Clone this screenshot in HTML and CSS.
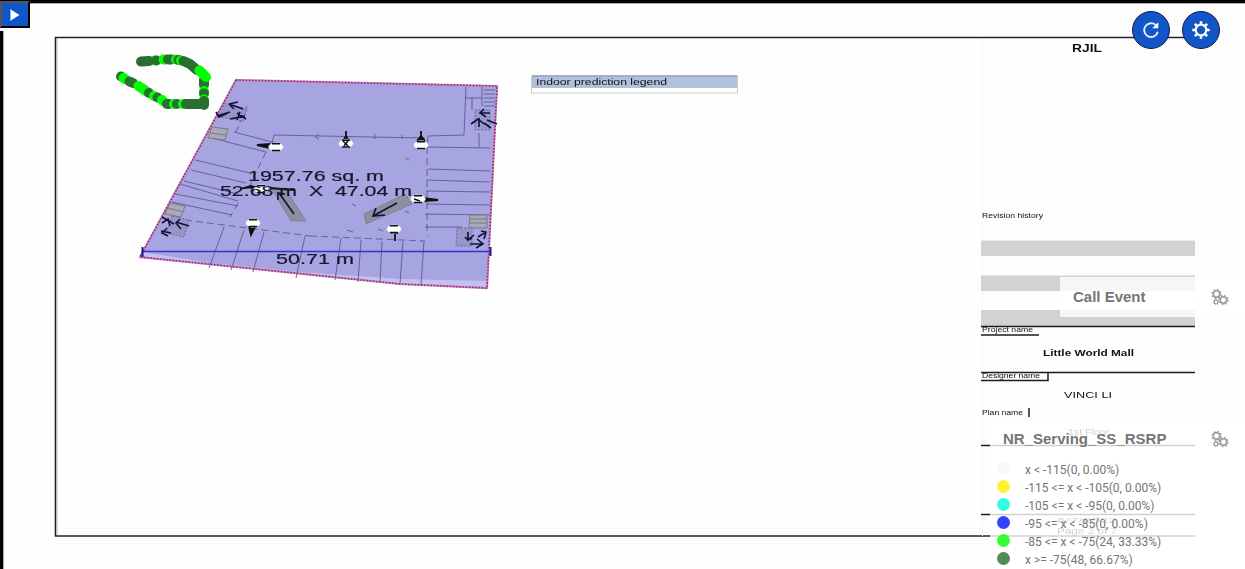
FILE: index.html
```html
<!DOCTYPE html>
<html lang="en">
<head>
<meta charset="utf-8">
<title>Indoor floor plan</title>
<link rel="stylesheet" href="styles.css">
</head>
<body>
<main class="map">
<svg class="plan" viewBox="0 0 1245 569" width="1245" height="569">
  <defs>
    <g id="cam"><ellipse rx="7.500" ry="4.400" fill="#fff" stroke="#a9a7c4" stroke-width=".6"/><path d="M-4-3.200H4M-4 3.500H4" stroke="#111" stroke-width="1.500"/></g>
  </defs>
  <!-- window and sheet borders -->
  <path d="M0 0H1245V3H0zM0 31H3V569H0z" fill="#000"/>
  <path d="M30 3.5H1245M3.5 31V569" stroke="#aaa" fill="none"/>
  <path d="M1195 37.5H55.5V536H990" stroke="#222" stroke-width="1.6" fill="none"/>
  <path d="M57.5 39V535" stroke="#ddd"/>
  <path d="M982.5 39V536M1198 39V420" stroke="#f8f8f8"/>

  <!-- building outline -->
  <g class="scan">
  <path d="M236 80L497 86L487 288L400 284L140 257z" fill="#a6a4e1"/>
  <path d="M143 252L210 263L300 272L400 279L488 281V287L400 284L140 257z" fill="#c5c0f2"/>
  <path d="M236 80L497 86L487 288L400 284L140 257z" fill="none" stroke="#d77cba" stroke-width="2.200"/>
  <path d="M236 80L497 86L487 288L400 284L140 257z" fill="none" stroke="#63386f" stroke-width="1.5" stroke-dasharray="1.4 1.8"/>
  <!-- rooms and bays -->
  <g class="walls">
    <path d="M466 87L464 135L428 136L427 147L490 148M428 169L490 171M427 180L490 182M426 191L490 192M426 204L490 205M425 214L490 215M425 227L462 227M479 133V147M465 98H472V110M472 98H482M482 87V106M484 90H495M484 94H495M484 98H495M484 102H495M484 106H495"/>
    <path d="M274 135L370 137L425 138M274 135L272 143M315 137L319 134M315 137L319 139M375 134V139M402 135V139M234 132L276 143M212 138L266 152M195 160L250 173M191 170L246 183M184 181L238 194M180 184L238 201M175 194L238 206M172 202L232 215"/>
    <path d="M247 106L236 132M266 152L249 187M238 203L230 217M185 220L310 236M310 236L425 241M427 147V236" stroke-dasharray="7 4"/>
    <path d="M224 227L209 268M244 230L231 270M264 232L253 272M305 236L296 278M341 238L335 280M361 240L358 282M382 241L380 283M403 241L400 284M424 241L421 285"/>
    <path d="M352 204L356 206M405 158L409 160M347 230L353 232M378 229L383 231M405 211L409 213"/>
  </g>
  <g class="stairs">
    <path d="M212 127L228 129L225 140L208 138zM210 133L226 135M170 203L185 206L181 217L165 214zM168 208L183 212"/>
    <path d="M470 215H487V228H469zM470 219H487M470 223H487"/>
  </g>
  <path d="M457 228H472V246H456zM475 110H490V130H475z" class="dots"/>
  <path d="M224 103L247 109L243 121L220 117zM172 216L189 220L184 237L166 233z" class="dots"/>
  <!-- ramps -->
  <path d="M272 189L285 188L306 221H291zM405 194L412 204L366 224L364 214z" fill="#8f8e9f" stroke="#77758a" stroke-dasharray="2 1"/>
  <path d="M279 193L294 214M278 200V193L285 194M397 203L373 216M376 208L373 216L385 215" class="arrow"/>
  <!-- direction arrows -->
  <g class="arrow">
    <path d="M229 104L243 109M229 104L238 102M229 104L234 109M216 112L219 117L228 113M217 116L230 112M230 119L245 116M237 113L246 119M240 112L237 120"/>
    <path d="M471 124L478 119L484 124M479 118V127M487 120L497 124M480 113H490M484 109L480 113L486 117M484 123L491 128"/>
    <path d="M162 217L174 224M162 223L168 219L170 226M161 231L171 233M167 228L162 233L168 236M176 222L189 226M180 219L176 223L181 229"/>
    <path d="M468 232V240L474 235M465 237L468 240L472 238M478 237L486 232M481 231L486 232L484 239M470 244H483M477 239L483 244L476 248"/>
  </g>
  <!-- antennas -->
  <path d="M257 145L270 144V148zM346 131V139M343 141L346 136L349 141M421 131V140M417 141L421 136L425 141M249 227L251 235L255 227zM391 233H398M395 233V241M422 198L438 200L424 201zM240 189L251 186L258 188M270 188L294 190" class="beam"/>
  <use href="#cam" x="276" y="147"/><use href="#cam" x="346" y="143.5"/><use href="#cam" x="421" y="145"/>
  <use href="#cam" x="261" y="189"/><use href="#cam" x="253" y="223"/><use href="#cam" x="394" y="229"/><use href="#cam" x="418" y="199"/>
  <path d="M343 141L348 146M348 141L344 146M414 199L420 201" class="arrow"/>
  <!-- measurements -->
  <path d="M142 251.5H490" stroke="#3334c8" stroke-width="1.4"/>
  <path d="M142.5 247V257M490.500 247V256" stroke="#22128c" stroke-width="2"/>
  <g class="measure">
    <text x="248" y="181" textLength="136" lengthAdjust="spacingAndGlyphs">1957.76 sq. m</text>
    <text x="220" y="196" textLength="192" lengthAdjust="spacingAndGlyphs">52.68 m&#160; X&#160; 47.04 m</text>
    <text x="276" y="264" textLength="78" lengthAdjust="spacingAndGlyphs">50.71 m</text>
  </g>
  </g>

  <!-- measured route: overlapping samples, later ones on top -->
  <g class="route">
    <path class="weak" d="M154.500 60.500h.01"/>
    <path d="M141 61.500L149 61M156.500 60.500h.01"/>
    <path class="weak" d="M163.500 59.500L165 59.500"/>
    <path d="M168 59.500L171.500 59.500"/>
    <path class="weak" d="M176 59.500h.01"/>
    <path d="M178.500 60h.01"/>
    <path class="weak" d="M181 60.500h.01"/>
    <path d="M183.500 61L190 64L197 70M204 80V85"/>
    <path class="weak" d="M199.500 70.500L206 77"/>
    <path class="weak" d="M204 91h.01"/>
    <path d="M204 93.500h.01"/>
    <path class="weak" d="M204 99.500h.01"/>
    <path d="M121 76.500h.01"/>
    <path class="weak" d="M123.500 78L125 79"/>
    <path d="M129.500 81.500L133 83"/>
    <path class="weak" d="M138.500 86L146 91"/>
    <path d="M149 93h.01"/>
    <path class="weak" d="M154 96h.01"/>
    <path d="M157.500 97.500h.01"/>
    <path class="weak" d="M162 100L163 101"/>
    <path d="M167 104L169 104"/>
    <path class="weak" d="M174 104h.01"/>
    <path d="M177 104h.01"/>
    <path class="weak" d="M183 104h.01"/>
    <path d="M186 104H204M204 101V105"/>
  </g>

  <!-- prediction legend on the sheet -->
  <path d="M531.500 75.500H737.500V93H531.500z" fill="#fff" stroke="#ccc"/>
  <path d="M532 76H737V88H532z" fill="#b0c1dc"/>
  <path d="M532 76H737" stroke="#8498b4"/>
  <g class="soft">
    <text x="536" y="85" font-size="9" textLength="131" lengthAdjust="spacingAndGlyphs">Indoor prediction legend</text>
  </g>

  <!-- title block -->
  <path d="M981 240.500H1195V256H981zM981 275.500H1195V291H981zM981 310H1195V326H981z" fill="#d2d2d2"/>
  <path d="M981 326.500H1195M981 372.500H1195M981 335H1039M981 380.500H1048V373M1029 408V417M981 445.500H1195M981 514.500H1195M990 536H1195" stroke="#1c1c1c" stroke-width="1.5" fill="none"/>
  <g class="soft">
    <text x="1072" y="52" font-size="10" class="bold" textLength="30" lengthAdjust="spacingAndGlyphs">RJIL</text>
    <text x="982" y="218" font-size="7" textLength="61" lengthAdjust="spacingAndGlyphs">Revision history</text>
    <text x="982" y="332" font-size="7" textLength="51" lengthAdjust="spacingAndGlyphs">Project name</text>
    <text x="1043" y="356" font-size="9" class="bold" textLength="91" lengthAdjust="spacingAndGlyphs">Little World Mall</text>
    <text x="982" y="378" font-size="7" textLength="58" lengthAdjust="spacingAndGlyphs">Designer name</text>
    <text x="1064" y="398" font-size="9" textLength="48" lengthAdjust="spacingAndGlyphs">VINCI LI</text>
    <text x="982" y="415" font-size="7" textLength="41" lengthAdjust="spacingAndGlyphs">Plan name</text>
    <text x="1068" y="435" font-size="9" textLength="41" lengthAdjust="spacingAndGlyphs">1st Floor</text>
    <text x="1057" y="523" font-size="8" textLength="60" lengthAdjust="spacingAndGlyphs">6/7/2022</text>
    <text x="1057" y="534" font-size="9" textLength="60" lengthAdjust="spacingAndGlyphs">Page 2 of 7</text>
  </g>
</svg>

<button class="play" aria-label="Play"><svg width="10" height="12" viewBox="0 0 10 12"><path d="M0 0L9.500 6L0 12z" fill="#fff"/><path d="M.5 0V12" stroke="#63caff"/></svg></button>

<div class="tools">
  <button class="round" aria-label="Refresh"><svg width="20" height="20" viewBox="0 0 20 20"><path d="M15.200 5.400A6.900 6.900 0 1 0 16.800 11.800" fill="none" stroke="#e5edfa" stroke-width="1.900"/><path d="M17.300 2.300V8.300H11.200z" fill="#fff"/></svg></button>
  <button class="round" aria-label="Settings"><svg width="20" height="20" viewBox="-10 -10 20 20"><circle r="5.300" fill="none" stroke="#fff" stroke-width="2.200"/><g stroke="#fff" stroke-width="2.600"><path d="M0-8.700V-5M0 8.700V5M-8.700 0H-5M8.700 0H5M-6.100-6.100L-4-4M6.100-6.100L4-4M-6.100 6.100L-4 4M6.100 6.100L4 4"/></g></svg></button>
</div>

<aside class="panels">
  <section class="panel event">
    <h2>Call Event</h2>
    <svg class="gears" width="18" height="17" viewBox="0 0 18 17"><g fill="none" stroke="#999"><g id="gear"><circle cx="5.500" cy="5" r="3.200" stroke-width="1.500"/><circle cx="5.500" cy="5" r="4.500" stroke-width="1.300" stroke-dasharray="1.700 1.834"/></g><use href="#gear" x="7" y="6"/><circle cx="5" cy="13" r="1.800" stroke-width="1.200"/><circle cx="5" cy="13" r="2.700" stroke-dasharray="1 1.120"/></g></svg>
  </section>
  <section class="panel signal">
    <header><h2>NR_Serving_SS_RSRP</h2>
    <svg class="gears" width="18" height="17" viewBox="0 0 18 17"><g fill="none" stroke="#999"><use href="#gear"/><use href="#gear" x="7" y="6"/><circle cx="5" cy="13" r="1.800" stroke-width="1.200"/><circle cx="5" cy="13" r="2.700" stroke-dasharray="1 1.120"/></g></svg></header>
    <ul>
      <li><i class="none"></i>x &lt; -115(0, 0.00%)</li>
      <li><i class="yellow"></i>-115 &lt;= x &lt; -105(0, 0.00%)</li>
      <li><i class="cyan"></i>-105 &lt;= x &lt; -95(0, 0.00%)</li>
      <li><i class="blue"></i>-95 &lt;= x &lt; -85(0, 0.00%)</li>
      <li><i class="lime"></i>-85 &lt;= x &lt; -75(24, 33.33%)</li>
      <li><i class="green"></i>x &gt;= -75(48, 66.67%)</li>
    </ul>
  </section>
</aside>
</main>
</body>
</html>
```
FILE: styles.css
```css
* { box-sizing: border-box; }
body { margin: 0; background: #fefefe; font-family: Roboto, sans-serif; overflow: hidden; }
.map { position: relative; width: 1245px; height: 569px; overflow: hidden; }
.plan { display: block; }
.scan { filter: blur(.35px); }
.walls { fill: none; stroke: #5c5a94; stroke-width: .9; }
.stairs { fill: #aaa8bd; stroke: #77776f; stroke-width: .9; }
.dots { fill: #9996c7; stroke: #5f5d9b; stroke-width: .8; stroke-dasharray: 2 1.5; }
.arrow { fill: none; stroke: #10103e; stroke-width: 1.6; }
.beam { fill: #111; stroke: #111; stroke-width: 1.8; }
.measure { font: 14px "Liberation Sans", sans-serif; fill: #18172c; stroke: #18172c; stroke-width: .2; }
.route { fill: none; stroke: #286f31; stroke-width: 10; stroke-linecap: round; stroke-linejoin: round; }
.route .weak { stroke: #00ff00; }
.soft { font-family: "Liberation Sans", sans-serif; fill: #111; filter: blur(.55px); }
.bold { font-weight: 700; }
button { display: flex; align-items: center; justify-content: center; margin: 0; border: 0; }
.play { position: absolute; left: 0; top: 1px; width: 30px; height: 27px; padding: 0; background: #1155c8; border: 2px solid; border-color: #555 #000 #000 #555; }
.play svg { margin-left: 0; margin-top: 1px; }
.tools { position: absolute; top: 11px; right: 25px; display: flex; gap: 12px; }
.round { width: 38px; height: 38px; padding: 0; border: 1px solid #10203d; border-radius: 50%; background: #1155c8; }
.panels { position: absolute; right: 0; top: 277px; display: flex; flex-direction: column; align-items: flex-end; gap: 101px; color: #757575; }
.panel { background: rgba(255, 255, 255, .8); }
.event { display: flex; align-items: center; justify-content: space-between; width: 185px; height: 40px; padding: 0 16px 0 13px; }
.signal { width: 255px; height: 151px; }
.signal header { display: flex; align-items: center; justify-content: space-between; height: 41px; padding: 1px 16px 0 13px; }
h2 { margin: 0; font: 700 15px/20px "Liberation Sans", sans-serif; }
ul { list-style: none; margin: 0; padding: 2px 0 0 7px; }
li { display: flex; align-items: center; height: 18px; font-size: 12px; line-height: 18px; white-space: nowrap; }
li i { width: 13px; height: 13px; margin: -4px 15px 0 0; border-radius: 50%; }
.none { background: #f8f8f8; }
.yellow { background: #fff133; }
.cyan { background: #33ffe4; }
.blue { background: #3343ff; }
.lime { background: #33ff33; }
.green { background: #538c5a; }
```
